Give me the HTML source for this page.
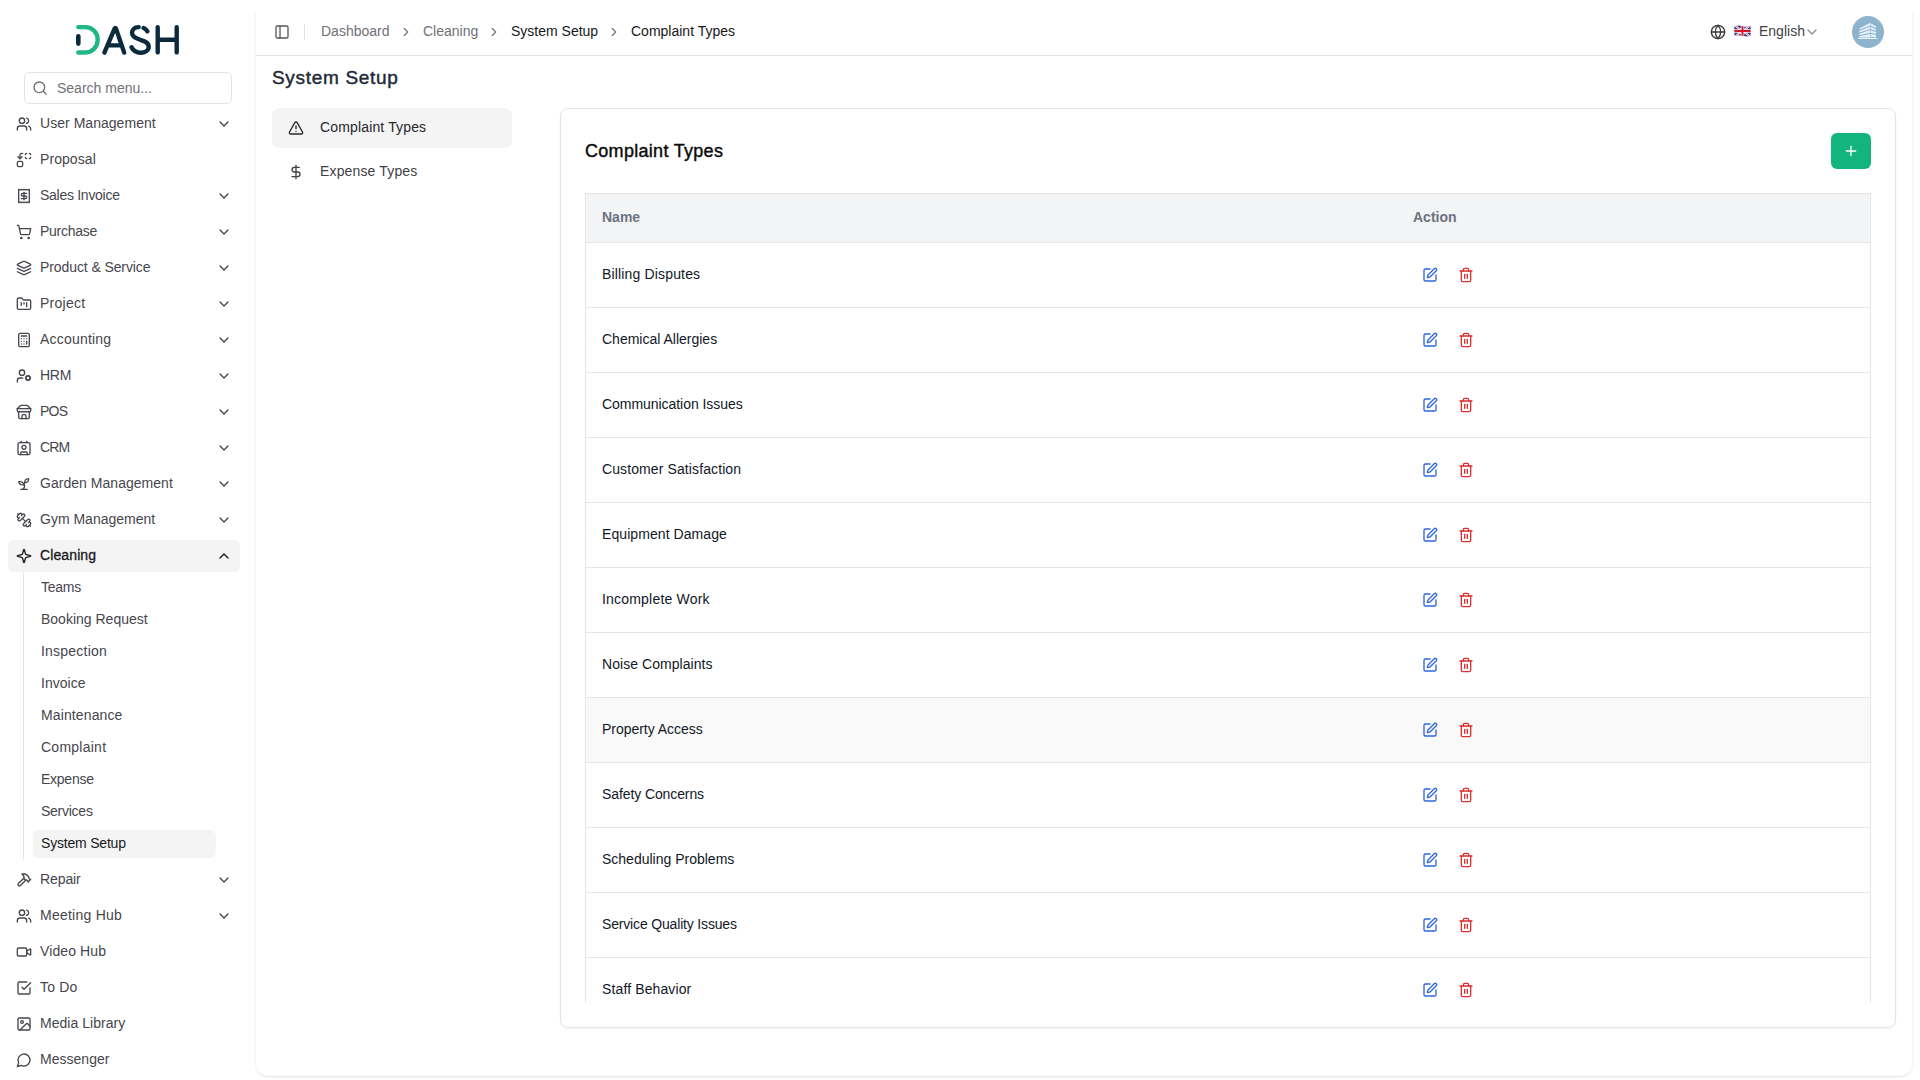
<!DOCTYPE html>
<html lang="en">
<head>
<meta charset="utf-8">
<title>System Setup</title>
<style>
*{box-sizing:border-box;margin:0;padding:0}
html,body{width:1920px;height:1080px;overflow:hidden;background:#fff}
body{font-family:"Liberation Sans",sans-serif;font-size:14px;color:#46464d;position:relative}
svg.i{width:16px;height:16px;fill:none;stroke:currentColor;stroke-width:2;stroke-linecap:round;stroke-linejoin:round;display:block}
#sidebar{position:absolute;left:0;top:0;width:256px;height:1080px;background:#fff}
#logo{position:absolute;left:64px;top:14px;width:128px;height:50px}
#search{position:absolute;left:24px;top:72px;width:208px;height:32px;border:1px solid #e4e4e7;border-radius:6px;background:#fff}
#search svg{position:absolute;left:7px;top:7px;color:#6b6b72}
#search span{position:absolute;left:32px;top:0;line-height:30px;font-size:14px;color:#71717a;white-space:nowrap}
.mi{position:absolute;left:8px;width:232px;height:32px;border-radius:6px;color:#46464d}
.mi.act{background:#f4f4f5;color:#18181b}
.mi svg.ic{position:absolute;left:8px;top:8px}
.mi svg.ch{position:absolute;left:208px;top:8px}
.mi span{position:absolute;left:32px;top:0;line-height:31px;white-space:nowrap}
.mi.act span{-webkit-text-stroke:0.3px #18181b}
#subline{position:absolute;left:23px;top:572px;width:1px;height:288px;background:#e4e4e7}
.si{position:absolute;left:33px;width:183px;height:28px;border-radius:6px;color:#46464d}
.si span{position:absolute;left:8px;top:0;line-height:27px;white-space:nowrap}
.si.act{background:#f4f4f5;color:#18181b}
#main{position:absolute;left:256px;top:0;width:1656px;height:1076px;background:#fff;border-radius:0 0 12px 12px;box-shadow:0 1px 3px 0 rgba(0,0,0,.10),0 1px 2px -1px rgba(0,0,0,.10);clip-path:inset(13px -8px -8px -8px)}
#hdr{position:absolute;left:0;top:0;width:1656px;height:56px;border-bottom:1px solid #e4e4e7}
#hdr .trig{position:absolute;left:18px;top:24px;color:#5a5a5a}
#hdr .sep{position:absolute;left:48px;top:24px;width:1px;height:16px;background:#e4e4e7}
.bc{position:absolute;top:0;line-height:62px;font-size:14px;color:#71717a;white-space:nowrap}
.bc.d{color:#18181b}
.bcs{position:absolute;top:25px;color:#71717a}
.bcs svg{width:14px;height:14px}
#lang{position:absolute;left:1503px;top:0;line-height:62px;color:#3f3f46;white-space:nowrap}
h1{position:absolute;left:16px;top:62px;font-size:19px;line-height:32px;font-weight:normal;-webkit-text-stroke:0.45px #1f2937;color:#1f2937;white-space:nowrap;letter-spacing:0.68px}
.tab{position:absolute;left:16px;width:240px;height:40px;border-radius:8px;color:#3f3f46}
.tab.act{background:#f4f4f5;color:#27272a}
.tab svg{position:absolute;left:16px;top:12px}
.tab span{position:absolute;left:48px;top:0;line-height:38px;white-space:nowrap;letter-spacing:0.15px}
#card{position:absolute;left:304px;top:108px;width:1336px;height:920px;border:1px solid #e5e5e5;border-radius:8px;background:#fff;box-shadow:0 1px 2px rgba(0,0,0,.05)}
#card h2{position:absolute;left:24px;top:26px;font-size:18px;line-height:32px;font-weight:normal;-webkit-text-stroke:0.4px #0a0a0a;color:#0a0a0a;white-space:nowrap;letter-spacing:0.3px}
#add{position:absolute;left:1270px;top:24px;width:40px;height:36px;border-radius:6px;background:#13b57f;color:#fff}
#add svg{position:absolute;left:12px;top:10px}
#tbl{position:absolute;left:24px;top:84px;width:1286px;height:810px;overflow:hidden;border-left:1px solid #e5e5e5;border-right:1px solid #e5e5e5;border-top:1px solid #e5e5e5}
#th{position:absolute;left:0;top:0;width:1284px;height:49px;background:#f3f4f6;border-bottom:1px solid #e5e5e5;font-weight:bold;color:#6b7280}
#th span{position:absolute;top:0;line-height:47px}
.r{position:absolute;left:0;width:1284px;height:65px;border-bottom:1px solid #e5e5e5;color:#111827}
.r.h{background:#f9f9f9}
.r span{position:absolute;left:16px;top:0;line-height:62px;white-space:nowrap}
.r .e{position:absolute;left:836px;top:24px;color:#2d65de}
.r .t{position:absolute;left:872px;top:24px;color:#da3030}
</style>
</head>
<body>
<svg width="0" height="0" style="position:absolute">
<defs>
<symbol id="users" viewBox="0 0 24 24"><path d="M16 21v-2a4 4 0 0 0-4-4H6a4 4 0 0 0-4 4v2"/><circle cx="9" cy="7" r="4"/><path d="M22 21v-2a4 4 0 0 0-3-3.870"/><path d="M16 3.130a4 4 0 0 1 0 7.750"/></symbol>
<symbol id="replace" viewBox="0 0 24 24"><path d="M14 4a2 2 0 0 1 2-2"/><path d="M16 10a2 2 0 0 1-2-2"/><path d="M20 2a2 2 0 0 1 2 2"/><path d="M22 8a2 2 0 0 1-2 2"/><path d="m3 7 3 3 3-3"/><path d="M6 10V5a3 3 0 0 1 3-3h1"/><rect x="2" y="14" width="8" height="8" rx="2"/></symbol>
<symbol id="receipt" viewBox="0 0 24 24"><path d="M4 2v20l2-1 2 1 2-1 2 1 2-1 2 1 2-1 2 1V2l-2 1-2-1-2 1-2-1-2 1-2-1-2 1Z"/><path d="M16 8h-6a2 2 0 1 0 0 4h4a2 2 0 1 1 0 4H8"/><path d="M12 17.500v-11"/></symbol>
<symbol id="cart" viewBox="0 0 24 24"><circle cx="8" cy="21" r="1"/><circle cx="19" cy="21" r="1"/><path d="M2.050 2.050h2l2.660 12.420a2 2 0 0 0 2 1.580h9.780a2 2 0 0 0 1.950-1.570l1.650-7.430H5.120"/></symbol>
<symbol id="layers" viewBox="0 0 24 24"><path d="m12.830 2.180a2 2 0 0 0-1.660 0L2.600 6.080a1 1 0 0 0 0 1.830l8.580 3.910a2 2 0 0 0 1.660 0l8.580-3.900a1 1 0 0 0 0-1.830Z"/><path d="m22 17.650-9.170 4.160a2 2 0 0 1-1.660 0L2 17.650"/><path d="m22 12.650-9.170 4.160a2 2 0 0 1-1.660 0L2 12.650"/></symbol>
<symbol id="fkanban" viewBox="0 0 24 24"><path d="M4 20h16a2 2 0 0 0 2-2V8a2 2 0 0 0-2-2h-7.930a2 2 0 0 1-1.660-.9l-.820-1.200A2 2 0 0 0 7.930 3H4a2 2 0 0 0-2 2v13c0 1.100.9 2 2 2Z"/><path d="M8 10v4"/><path d="M12 10v2"/><path d="M16 10v6"/></symbol>
<symbol id="calc" viewBox="0 0 24 24"><rect width="16" height="20" x="4" y="2" rx="2"/><line x1="8" x2="16" y1="6" y2="6"/><line x1="16" x2="16" y1="14" y2="18"/><path d="M16 10h.01"/><path d="M12 10h.01"/><path d="M8 10h.01"/><path d="M12 14h.01"/><path d="M8 14h.01"/><path d="M12 18h.01"/><path d="M8 18h.01"/></symbol>
<symbol id="usercog" viewBox="0 0 24 24"><circle cx="18" cy="15" r="3"/><circle cx="9" cy="7" r="4"/><path d="M10 15H6a4 4 0 0 0-4 4v2"/><path d="m21.700 16.400-.9-.3"/><path d="m15.200 13.900-.9-.3"/><path d="m16.600 18.700.3-.9"/><path d="m19.100 12.200.3-.9"/><path d="m19.600 18.700-.4-1"/><path d="m16.800 12.300-.4-1"/><path d="m14.300 16.600 1-.4"/><path d="m20.700 13.800 1-.4"/></symbol>
<symbol id="store" viewBox="0 0 24 24"><path d="m2 7 4.410-4.410A2 2 0 0 1 7.830 2h8.340a2 2 0 0 1 1.420.590L22 7"/><path d="M4 12v8a2 2 0 0 0 2 2h12a2 2 0 0 0 2-2v-8"/><path d="M15 22v-4a2 2 0 0 0-2-2h-2a2 2 0 0 0-2 2v4"/><path d="M2 7h20"/><path d="M22 7v3a2 2 0 0 1-2 2a2.700 2.700 0 0 1-1.590-.630.700.700 0 0 0-.820 0A2.700 2.700 0 0 1 16 12a2.700 2.700 0 0 1-1.590-.630.700.700 0 0 0-.820 0A2.700 2.700 0 0 1 12 12a2.700 2.700 0 0 1-1.590-.630.700.700 0 0 0-.820 0A2.700 2.700 0 0 1 8 12a2.700 2.700 0 0 1-1.590-.630.700.700 0 0 0-.820 0A2.700 2.700 0 0 1 4 12a2 2 0 0 1-2-2V7"/></symbol>
<symbol id="contact" viewBox="0 0 24 24"><path d="M16 2v2"/><path d="M7 22v-2a2 2 0 0 1 2-2h6a2 2 0 0 1 2 2v2"/><path d="M8 2v2"/><circle cx="12" cy="11" r="3"/><rect x="3" y="4" width="18" height="18" rx="2"/></symbol>
<symbol id="sprout" viewBox="0 0 24 24"><path d="M7 20h10"/><path d="M10 20c5.500-2.500.8-6.400 3-10"/><path d="M9.500 9.400c1.100.8 1.800 2.200 2.300 3.700-2 .4-3.500.4-4.800-.3-1.200-.6-2.300-1.900-3-4.200 2.800-.5 4.400 0 5.500.8z"/><path d="M14.100 6a7 7 0 0 0-1.100 4c1.900-.1 3.300-.6 4.300-1.400 1-1 1.600-2.300 1.700-4.600-2.700.1-4 1-4.900 2z"/></symbol>
<symbol id="dumbbell" viewBox="0 0 24 24"><path d="M14.400 14.400 9.600 9.600"/><path d="M18.657 21.485a2 2 0 1 1-2.829-2.828l-1.767 1.768a2 2 0 1 1-2.829-2.829l6.364-6.364a2 2 0 1 1 2.829 2.829l-1.768 1.767a2 2 0 1 1 2.828 2.829z"/><path d="m21.500 21.500-1.400-1.400"/><path d="M3.900 3.900 2.500 2.500"/><path d="M6.404 12.768a2 2 0 1 1-2.829-2.829l1.768-1.767a2 2 0 1 1-2.828-2.829l2.828-2.828a2 2 0 1 1 2.829 2.828l1.767-1.768a2 2 0 1 1 2.829 2.829z"/></symbol>
<symbol id="sparkle" viewBox="0 0 24 24"><path d="M9.937 15.500A2 2 0 0 0 8.500 14.063l-6.135-1.582a.5.5 0 0 1 0-.962L8.500 9.936A2 2 0 0 0 9.937 8.500l1.582-6.135a.5.5 0 0 1 .963 0L14.063 8.500A2 2 0 0 0 15.500 9.937l6.135 1.581a.5.5 0 0 1 0 .964L15.500 14.063a2 2 0 0 0-1.437 1.437l-1.582 6.135a.5.5 0 0 1-.963 0z"/></symbol>
<symbol id="hammer" viewBox="0 0 24 24"><path d="m15 12-8.373 8.373a1 1 0 1 1-3-3L12 9"/><path d="m18 15 4-4"/><path d="m21.500 11.500-1.914-1.914A2 2 0 0 1 19 8.172V7l-2.260-2.260a6 6 0 0 0-4.202-1.756L9 2.960l.920.820A6.180 6.180 0 0 1 12 8.400V10l2 2h1.172a2 2 0 0 1 1.414.586L18.500 14.500"/></symbol>
<symbol id="video" viewBox="0 0 24 24"><path d="m16 13 5.223 3.482a.5.5 0 0 0 .777-.416V7.870a.5.5 0 0 0-.752-.432L16 10.500"/><rect x="2" y="6" width="14" height="12" rx="2"/></symbol>
<symbol id="checksq" viewBox="0 0 24 24"><path d="m9 11 3 3L22 4"/><path d="M21 12v7a2 2 0 0 1-2 2H5a2 2 0 0 1-2-2V5a2 2 0 0 1 2-2h11"/></symbol>
<symbol id="image" viewBox="0 0 24 24"><rect width="18" height="18" x="3" y="3" rx="2" ry="2"/><circle cx="9" cy="9" r="2"/><path d="m21 15-3.086-3.086a2 2 0 0 0-2.828 0L6 21"/></symbol>
<symbol id="msg" viewBox="0 0 24 24"><path d="M7.900 20A9 9 0 1 0 4 16.100L2 22Z"/></symbol>
<symbol id="cd" viewBox="0 0 24 24"><path d="m6 9 6 6 6-6"/></symbol>
<symbol id="cu" viewBox="0 0 24 24"><path d="m18 15-6-6-6 6"/></symbol>
<symbol id="cr" viewBox="0 0 24 24"><path d="m9 18 6-6-6-6"/></symbol>
<symbol id="panel" viewBox="0 0 24 24"><rect width="18" height="18" x="3" y="3" rx="2"/><path d="M9 3v18"/></symbol>
<symbol id="globe" viewBox="0 0 24 24"><circle cx="12" cy="12" r="10"/><path d="M12 2a14.500 14.500 0 0 0 0 20 14.500 14.500 0 0 0 0-20"/><path d="M2 12h20"/></symbol>
<symbol id="srch" viewBox="0 0 24 24"><circle cx="11" cy="11" r="8"/><path d="m21 21-4.300-4.300"/></symbol>
<symbol id="alert" viewBox="0 0 24 24"><path d="m21.730 18-8-14a2 2 0 0 0-3.480 0l-8 14A2 2 0 0 0 4 21h16a2 2 0 0 0 1.730-3"/><path d="M12 9v4"/><path d="M12 17h.01"/></symbol>
<symbol id="dollar" viewBox="0 0 24 24"><line x1="12" x2="12" y1="2" y2="22"/><path d="M17 5H9.500a3.500 3.500 0 0 0 0 7h5a3.500 3.500 0 0 1 0 7H6"/></symbol>
<symbol id="plus" viewBox="0 0 24 24"><path d="M5 12h14"/><path d="M12 5v14"/></symbol>
<symbol id="pen" viewBox="0 0 24 24"><path d="M12 3H5a2 2 0 0 0-2 2v14a2 2 0 0 0 2 2h14a2 2 0 0 0 2-2v-7"/><path d="M18.375 2.625a1 1 0 0 1 3 3l-9.013 9.014a2 2 0 0 1-.853.505l-2.873.840a.5.5 0 0 1-.620-.620l.840-2.873a2 2 0 0 1 .506-.852z"/></symbol>
<symbol id="trash" viewBox="0 0 24 24"><path d="M3 6h18"/><path d="M19 6v14c0 1-1 2-2 2H7c-1 0-2-1-2-2V6"/><path d="M8 6V4c0-1 1-2 2-2h4c1 0 2 1 2 2v2"/><line x1="10" x2="10" y1="11" y2="17"/><line x1="14" x2="14" y1="11" y2="17"/></symbol>
</defs>
</svg>
<div id="sidebar">
<svg id="logo" viewBox="0 0 128 50" fill="none" stroke-linecap="round" stroke-linejoin="round">
<path d="M14.3 13.1H21.5A12.2 12.7 0 0 1 21.5 38.5H14.3" stroke="#20b685" stroke-width="4.4"/>
<path d="M14.3 22.2V29.6" stroke="#0b2b3c" stroke-width="4.6"/>
<path d="M40.4 38.6L50.6 14.6Q51.3 13.4 52 14.6L60.2 38.6M44.8 31.4H56.4" stroke="#0b2b3c" stroke-width="4.4"/>
<path d="M74.7 13.1C70 13.1 68 16 68 19C68 23.3 72.7 24.3 76 25.7C80 27 84.7 28 84.7 32.7C84.7 36.700 80.7 38.7 76.7 38.7C72.7 38.7 69.3 37 67.5 33.3M79.6 14C81.200 14.700 82.5 15.800 83.4 17.300" stroke="#0b2b3c" stroke-width="4.4"/>
<path d="M93.7 13.3V38.4M112.7 13.3V38.4M93.7 25.700H112.7" stroke="#0b2b3c" stroke-width="4.4"/>
</svg>
<div id="search"><svg class="i"><use href="#srch"/></svg><span>Search menu...</span></div>
<div class="mi" style="top:108px"><svg class="i ic"><use href="#users"/></svg><span style="letter-spacing:0.036px">User Management</span><svg class="i ch"><use href="#cd"/></svg></div>
<div class="mi" style="top:144px"><svg class="i ic"><use href="#replace"/></svg><span style="letter-spacing:0.071px">Proposal</span></div>
<div class="mi" style="top:180px"><svg class="i ic"><use href="#receipt"/></svg><span style="letter-spacing:-0.275px">Sales Invoice</span><svg class="i ch"><use href="#cd"/></svg></div>
<div class="mi" style="top:216px"><svg class="i ic"><use href="#cart"/></svg><span style="letter-spacing:-0.257px">Purchase</span><svg class="i ch"><use href="#cd"/></svg></div>
<div class="mi" style="top:252px"><svg class="i ic"><use href="#layers"/></svg><span style="letter-spacing:-0.094px">Product &amp; Service</span><svg class="i ch"><use href="#cd"/></svg></div>
<div class="mi" style="top:288px"><svg class="i ic"><use href="#fkanban"/></svg><span style="letter-spacing:0.25px">Project</span><svg class="i ch"><use href="#cd"/></svg></div>
<div class="mi" style="top:324px"><svg class="i ic"><use href="#calc"/></svg><span style="letter-spacing:0.2px">Accounting</span><svg class="i ch"><use href="#cd"/></svg></div>
<div class="mi" style="top:360px"><svg class="i ic"><use href="#usercog"/></svg><span style="letter-spacing:-0.25px">HRM</span><svg class="i ch"><use href="#cd"/></svg></div>
<div class="mi" style="top:396px"><svg class="i ic"><use href="#store"/></svg><span style="letter-spacing:-0.8px">POS</span><svg class="i ch"><use href="#cd"/></svg></div>
<div class="mi" style="top:432px"><svg class="i ic"><use href="#contact"/></svg><span style="letter-spacing:-0.8px">CRM</span><svg class="i ch"><use href="#cd"/></svg></div>
<div class="mi" style="top:468px"><svg class="i ic"><use href="#sprout"/></svg><span style="letter-spacing:0.031px">Garden Management</span><svg class="i ch"><use href="#cd"/></svg></div>
<div class="mi" style="top:504px"><svg class="i ic"><use href="#dumbbell"/></svg><span>Gym Management</span><svg class="i ch"><use href="#cd"/></svg></div>
<div class="mi act" style="top:540px"><svg class="i ic"><use href="#sparkle"/></svg><span style="letter-spacing:0.114px">Cleaning</span><svg class="i ch"><use href="#cu"/></svg></div>
<div id="subline"></div>
<div class="si" style="top:574px"><span style="letter-spacing:-0.25px">Teams</span></div>
<div class="si" style="top:606px"><span>Booking Request</span></div>
<div class="si" style="top:638px"><span style="letter-spacing:0.222px">Inspection</span></div>
<div class="si" style="top:670px"><span style="letter-spacing:0.033px">Invoice</span></div>
<div class="si" style="top:702px"><span style="letter-spacing:0.12px">Maintenance</span></div>
<div class="si" style="top:734px"><span style="letter-spacing:0.25px">Complaint</span></div>
<div class="si" style="top:766px"><span style="letter-spacing:-0.25px">Expense</span></div>
<div class="si" style="top:798px"><span style="letter-spacing:-0.257px">Services</span></div>
<div class="si act" style="top:830px"><span style="letter-spacing:-0.2px">System Setup</span></div>
<div class="mi" style="top:864px"><svg class="i ic"><use href="#hammer"/></svg><span style="letter-spacing:-0.1px">Repair</span><svg class="i ch"><use href="#cd"/></svg></div>
<div class="mi" style="top:900px"><svg class="i ic"><use href="#users"/></svg><span style="letter-spacing:0.25px">Meeting Hub</span><svg class="i ch"><use href="#cd"/></svg></div>
<div class="mi" style="top:936px"><svg class="i ic"><use href="#video"/></svg><span style="letter-spacing:0.1px">Video Hub</span></div>
<div class="mi" style="top:972px"><svg class="i ic"><use href="#checksq"/></svg><span style="letter-spacing:0.175px">To Do</span></div>
<div class="mi" style="top:1008px"><svg class="i ic"><use href="#image"/></svg><span style="letter-spacing:0.042px">Media Library</span></div>
<div class="mi" style="top:1044px"><svg class="i ic"><use href="#msg"/></svg><span style="letter-spacing:0.025px">Messenger</span></div>
</div>
<div id="main">
<div id="hdr"><svg class="i trig"><use href="#panel"/></svg><div class="sep"></div>
<span class="bc" style="left:65px">Dashboard</span><span class="bcs" style="left:143px"><svg class="i"><use href="#cr"/></svg></span>
<span class="bc" style="left:167px">Cleaning</span><span class="bcs" style="left:231px"><svg class="i"><use href="#cr"/></svg></span>
<span class="bc d" style="left:255px">System Setup</span><span class="bcs" style="left:351px"><svg class="i"><use href="#cr"/></svg></span>
<span class="bc d" style="left:375px">Complaint Types</span>
<svg class="i" style="position:absolute;left:1454px;top:24px;color:#38383d"><use href="#globe"/></svg>
<svg style="position:absolute;left:1478px;top:25px" width="17" height="12" viewBox="0 0 60 42"><clipPath id="fc"><path d="M1 5Q14 -1 30 4T59 3V37Q46 43 30 38T1 39Z"/></clipPath><g clip-path="url(#fc)"><rect width="60" height="42" fill="#1b2370"/><path d="M0 0L60 42M60 0L0 42" stroke="#fff" stroke-width="7"/><path d="M0 0L60 42M60 0L0 42" stroke="#d8283f" stroke-width="2"/><path d="M30 0V42M0 21H60" stroke="#fff" stroke-width="13"/><path d="M30 0V42M0 21H60" stroke="#d6142c" stroke-width="7"/></g></svg>
<span id="lang">English</span><svg class="i" style="position:absolute;left:1548px;top:24px;color:#8b8b93"><use href="#cd"/></svg>
<svg style="position:absolute;left:1596px;top:16px" width="32" height="32" viewBox="0 0 32 32"><circle cx="16" cy="16" r="16" fill="#8db3cd"/><path d="M7.600 12.300L18.200 6.900V21.500H7.100Z" fill="#e6f3fb"/><path d="M18.200 6.900L24 10.300V21.300H18.200Z" fill="#e2f0f9"/><g stroke="#8db3cd" stroke-width="1.1" fill="none"><path d="M7 14.400L18.200 9.900M7 17.300L18.200 13.600M7 19.700L18.200 17.400"/><path d="M18.500 8.500V21.500" stroke-width="0.600"/><path d="M18.500 10.100L24.200 12.700M18.500 13.800L24.200 15.400M18.500 17.500L24.200 18.200"/></g><path d="M6.200 22H25.300V23H6.200Z" fill="#e6f3fb"/></svg>
</div>
<h1>System Setup</h1>
<div class="tab act" style="top:108px"><svg class="i"><use href="#alert"/></svg><span>Complaint Types</span></div>
<div class="tab" style="top:152px"><svg class="i"><use href="#dollar"/></svg><span>Expense Types</span></div>
<div id="card"><h2>Complaint Types</h2><div id="add"><svg class="i"><use href="#plus"/></svg></div>
<div id="tbl"><div id="th"><span style="left:16px">Name</span><span style="left:827px">Action</span></div>
<div class="r" style="top:49px"><span style="letter-spacing:0.16px">Billing Disputes</span><svg class="i e"><use href="#pen"/></svg><svg class="i t"><use href="#trash"/></svg></div>
<div class="r" style="top:114px"><span>Chemical Allergies</span><svg class="i e"><use href="#pen"/></svg><svg class="i t"><use href="#trash"/></svg></div>
<div class="r" style="top:179px"><span style="letter-spacing:-0.047px">Communication Issues</span><svg class="i e"><use href="#pen"/></svg><svg class="i t"><use href="#trash"/></svg></div>
<div class="r" style="top:244px"><span style="letter-spacing:0.105px">Customer Satisfaction</span><svg class="i e"><use href="#pen"/></svg><svg class="i t"><use href="#trash"/></svg></div>
<div class="r" style="top:309px"><span style="letter-spacing:0.073px">Equipment Damage</span><svg class="i e"><use href="#pen"/></svg><svg class="i t"><use href="#trash"/></svg></div>
<div class="r" style="top:374px"><span style="letter-spacing:0.2px">Incomplete Work</span><svg class="i e"><use href="#pen"/></svg><svg class="i t"><use href="#trash"/></svg></div>
<div class="r" style="top:439px"><span style="letter-spacing:0.053px">Noise Complaints</span><svg class="i e"><use href="#pen"/></svg><svg class="i t"><use href="#trash"/></svg></div>
<div class="r h" style="top:504px"><span style="letter-spacing:-0.036px">Property Access</span><svg class="i e"><use href="#pen"/></svg><svg class="i t"><use href="#trash"/></svg></div>
<div class="r" style="top:569px"><span style="letter-spacing:-0.1px">Safety Concerns</span><svg class="i e"><use href="#pen"/></svg><svg class="i t"><use href="#trash"/></svg></div>
<div class="r" style="top:634px"><span>Scheduling Problems</span><svg class="i e"><use href="#pen"/></svg><svg class="i t"><use href="#trash"/></svg></div>
<div class="r" style="top:699px"><span style="letter-spacing:-0.167px">Service Quality Issues</span><svg class="i e"><use href="#pen"/></svg><svg class="i t"><use href="#trash"/></svg></div>
<div class="r" style="top:764px"><span style="letter-spacing:0.123px">Staff Behavior</span><svg class="i e"><use href="#pen"/></svg><svg class="i t"><use href="#trash"/></svg></div>
</div></div>
</div>
</body>
</html>
